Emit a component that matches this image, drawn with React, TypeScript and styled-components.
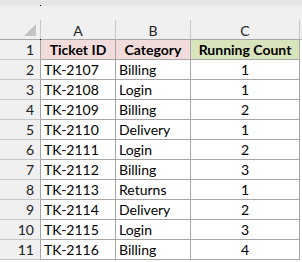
import React from 'react'
import styled, { createGlobalStyle } from 'styled-components'

type Row = {
  id: string
  category: string
  count: number
}

const rows: Row[] = [
  { id: 'TK-2107', category: 'Billing', count: 1 },
  { id: 'TK-2108', category: 'Login', count: 1 },
  { id: 'TK-2109', category: 'Billing', count: 2 },
  { id: 'TK-2110', category: 'Delivery', count: 1 },
  { id: 'TK-2111', category: 'Login', count: 2 },
  { id: 'TK-2112', category: 'Billing', count: 3 },
  { id: 'TK-2113', category: 'Returns', count: 1 },
  { id: 'TK-2114', category: 'Delivery', count: 2 },
  { id: 'TK-2115', category: 'Login', count: 3 },
  { id: 'TK-2116', category: 'Billing', count: 4 },
]

const Global = createGlobalStyle`
  html, body {
    margin: 0;
    padding: 0;
    background: #ffffff;
  }
  body {
    font-family: Lato, "Liberation Sans", sans-serif;
    font-size: 14px;
    color: #000;
  }
`

const App: React.FC = () => {
  return (
    <>
      <Global />
      <Sheet>
        <Ribbon>
          <Tick />
        </Ribbon>
        <Gap />
        <Grid>
          <Corner>
            <Triangle />
            <CornerDot />
          </Corner>
          <ColHead>A</ColHead>
          <ColHead>B</ColHead>
          <ColHead>C</ColHead>
          <Filler $head />

          <RowHead>1</RowHead>
          <Cell $bg="#f2dcdb" $align="center" $bold>
            Ticket ID
          </Cell>
          <Cell $bg="#f2dcdb" $align="center" $bold>
            Category
          </Cell>
          <Cell $bg="#d8e4bc" $align="center" $bold>
            Running Count
          </Cell>
          <Filler />

          {rows.map((row, i) => (
            <React.Fragment key={row.id}>
              <RowHead>{i + 2}</RowHead>
              <Cell>{row.id}</Cell>
              <Cell>{row.category}</Cell>
              <Cell $align="center">{row.count}</Cell>
              <Filler />
            </React.Fragment>
          ))}
        </Grid>
      </Sheet>
    </>
  )
}

const Sheet = styled.div`
  width: 302px;
  height: 262px;
  overflow: hidden;
  background: #ffffff;
`
const Ribbon = styled.div`
  position: relative;
  height: 6px;
  background: #e6e6e6;
`
const Tick = styled.span`
  position: absolute;
  left: 40px;
  bottom: 0;
  width: 1px;
  height: 1px;
  background: #000;
`
const Gap = styled.div`
  height: 14px;
  background: #f0f0f0;
`
const Grid = styled.div`
  display: grid;
  grid-template-columns: 41px 75px 75px 109px 2px;
  grid-auto-rows: 20px;
`
const Corner = styled.div`
  position: relative;
  background: #f0f0f0;
  border-right: 1px solid #c8c8c8;
  border-bottom: 1px solid #a6a6a6;
`
const Triangle = styled.span`
  position: absolute;
  right: 4px;
  bottom: 3px;
  width: 0;
  height: 0;
  border-left: 12px solid transparent;
  border-bottom: 12px solid #c4c4c4;
`
const CornerDot = styled.span`
  position: absolute;
  right: -1px;
  bottom: -1px;
  width: 1px;
  height: 1px;
  background: #000;
`
const ColHead = styled.div`
  background: #f0f0f0;
  border-right: 1px solid #c8c8c8;
  border-bottom: 1px solid #a6a6a6;
  display: flex;
  align-items: center;
  justify-content: center;
  font-size: 14px;
  color: #222;
  padding-top: 1px;
`
const RowHead = styled.div`
  background: #f0f0f0;
  border-right: 1px solid #a6a6a6;
  border-bottom: 1px solid #c8c8c8;
  display: flex;
  align-items: center;
  justify-content: flex-end;
  padding-right: 6px;
  font-size: 14px;
  color: #222;
`
const Cell = styled.div<{ $bg?: string; $align?: string; $bold?: boolean }>`
  background: ${(p) => p.$bg || '#ffffff'};
  border-right: 1px solid #a6a6a6;
  border-bottom: 1px solid #a6a6a6;
  display: flex;
  align-items: center;
  justify-content: ${(p) => (p.$align === 'center' ? 'center' : 'flex-start')};
  padding: 0 3px;
  font-size: 14px;
  font-weight: ${(p) => (p.$bold ? 700 : 400)};
  white-space: nowrap;
  overflow: hidden;
`
const Filler = styled.div<{ $head?: boolean }>`
  background: ${(p) => (p.$head ? '#f0f0f0' : '#ffffff')};
  border-bottom: ${(p) => (p.$head ? '1px solid #a6a6a6' : 'none')};
`

export default App
